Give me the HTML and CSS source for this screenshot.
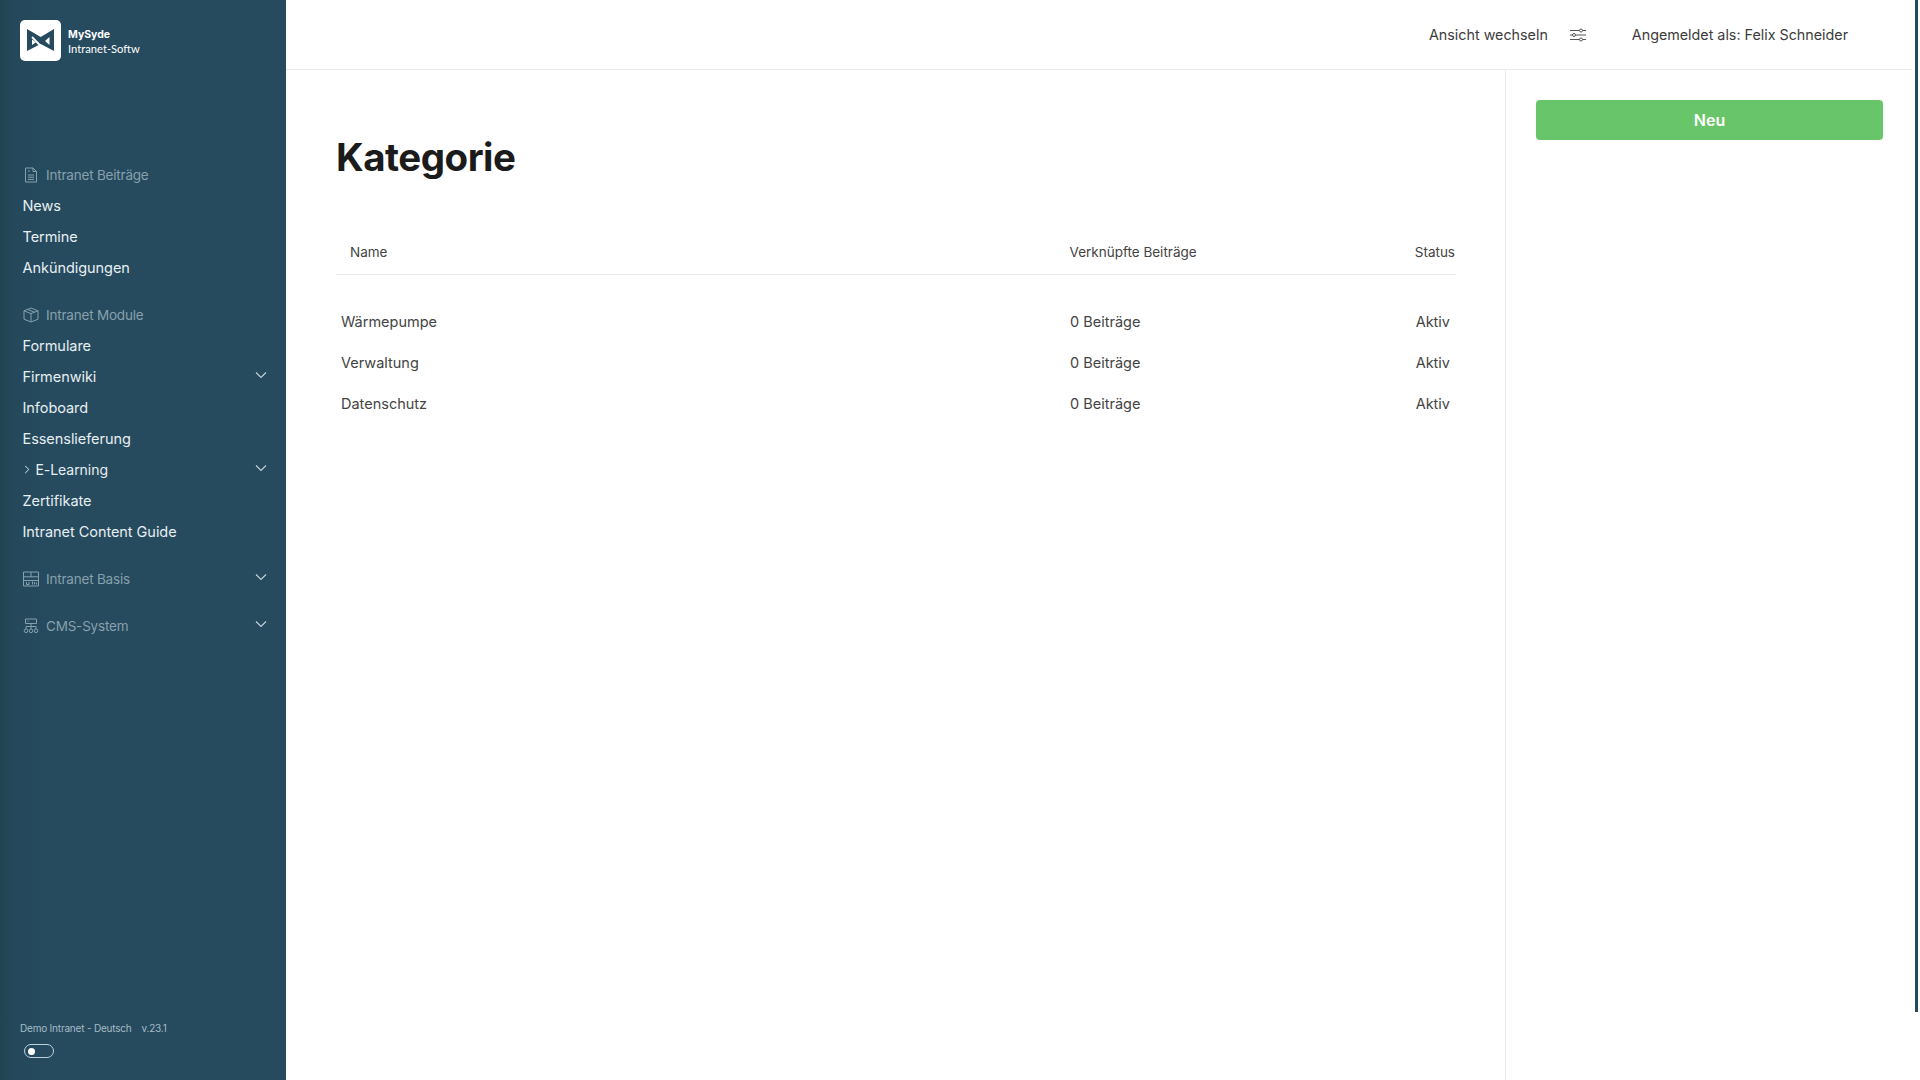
FILE: index.html
```html
<!DOCTYPE html>
<html lang="de">
<head>
<meta charset="utf-8">
<title>Kategorie</title>
<link rel="stylesheet" href="styles.css">
</head>
<body>
<div class="app">
  <aside class="sidebar">
    <div class="brand">
      <div class="logo">
        <svg viewBox="0 0 41 41" width="41" height="41"><path class="logo-mark" d="M7 9 L20.700 17 L34 9 V31 L20.700 24 L7 31 Z"/><path class="logo-cut" d="M12 17 L26 31.500"/><path class="logo-hole" d="M12 19.500V25L16 22.300ZM29.500 17V25L25 21Z"/></svg>
      </div>
      <div class="brand-text"><strong>MySyde</strong><span>Intranet-Softw</span></div>
    </div>
    <nav class="nav">
      <div class="nav-head first">
        <svg class="nav-icon" viewBox="0 0 16 16"><path d="M2.500 1h7.500l3.500 3.500V15h-11zM10 1v3.500h3.500M5 8h6M5 10.200h6M5 12.400h6M5 4h2"/></svg>
        <span>Intranet Beiträge</span>
      </div>
      <a class="nav-item">News</a>
      <a class="nav-item">Termine</a>
      <a class="nav-item">Ankündigungen</a>
      <div class="nav-head">
        <svg class="nav-icon" viewBox="0 0 16 16"><path d="M8 1 15 3.800v8.400L8 15 1 12.200V3.800zM1 3.800 8 6.600 15 3.800M8 6.600V15M4.500 2.400l7 2.800"/></svg>
        <span>Intranet Module</span>
      </div>
      <a class="nav-item">Formulare</a>
      <a class="nav-item">Firmenwiki<svg class="chev" viewBox="0 0 12 8"><path d="M1 1.500 6 6.500l5-5"/></svg></a>
      <a class="nav-item">Infoboard</a>
      <a class="nav-item">Essenslieferung</a>
      <a class="nav-item"><svg class="sub-mark" viewBox="0 0 6 10"><path d="M1 1 5 5 1 9"/></svg><span class="sub-label">E-Learning</span><svg class="chev" viewBox="0 0 12 8"><path d="M1 1.500 6 6.500l5-5"/></svg></a>
      <a class="nav-item">Zertifikate</a>
      <a class="nav-item">Intranet Content Guide</a>
      <div class="nav-head">
        <svg class="nav-icon" viewBox="0 0 16 16"><path d="M.5 1h15v14H.5zM.5 5.800h15M8 1v4.800M.5 9.500h15M3.500 11v2.500H6V11M9.500 10.500v3M11.500 11v2.500M13.500 11.500v2"/></svg>
        <span>Intranet Basis</span><svg class="chev" viewBox="0 0 12 8"><path d="M1 1.500 6 6.500l5-5"/></svg>
      </div>
      <div class="nav-head">
        <svg class="nav-icon" viewBox="0 0 16 16"><path d="M2.500 1h11v4.500h-11zM4.500 3.200h1M8 5.500V8.500M3 10.800V8.500h10v2.300M8 8.500v2.300"/><circle cx="3" cy="12.800" r="1.800"/><circle cx="8" cy="12.800" r="1.800"/><circle cx="13" cy="12.800" r="1.800"/></svg>
        <span>CMS-System</span><svg class="chev" viewBox="0 0 12 8"><path d="M1 1.500 6 6.500l5-5"/></svg>
      </div>
    </nav>
    <div class="side-foot">
      <div class="side-meta"><span>Demo Intranet - Deutsch</span><span>v.23.1</span></div>
      <div class="toggle"><i></i></div>
    </div>
  </aside>
  <div class="main">
    <header class="topbar">
      <span>Ansicht wechseln</span>
      <svg class="sliders" viewBox="0 0 16 14"><path d="M0 2.500h9.500M12.500 2.500H16M0 7h2.500M5.500 7H16M0 11.500h9.500M12.500 11.500H16"/><circle cx="11" cy="2.500" r="1.500"/><circle cx="4" cy="7" r="1.500"/><circle cx="11" cy="11.500" r="1.500"/></svg>
      <span class="user">Angemeldet als: Felix Schneider</span>
    </header>
    <div class="body">
      <main class="content">
        <h1>Kategorie</h1>
        <div class="table">
          <div class="thead">
            <span class="c-name">Name</span>
            <span class="c-count">Verknüpfte Beiträge</span>
            <span class="c-status">Status</span>
          </div>
          <div class="rows">
            <div class="row"><span class="c-name">Wärmepumpe</span><span class="c-count">0 Beiträge</span><span class="c-status">Aktiv</span></div>
            <div class="row"><span class="c-name">Verwaltung</span><span class="c-count">0 Beiträge</span><span class="c-status">Aktiv</span></div>
            <div class="row"><span class="c-name">Datenschutz</span><span class="c-count">0 Beiträge</span><span class="c-status">Aktiv</span></div>
          </div>
        </div>
      </main>
      <aside class="actions"><button class="btn-new">Neu</button></aside>
    </div>
  </div>
</div>
<div class="scrollthumb"></div>
</body>
</html>
```
FILE: styles.css
```css
* { box-sizing: border-box; }
html, body { margin: 0; height: 100%; overflow: hidden; }
body { font-family: "Inter", "Noto Sans", sans-serif; background: #fff; color: #444; }
.app { display: flex; height: 1080px; }

.sidebar {
  width: 286px; flex: none; display: flex; flex-direction: column;
  background: linear-gradient(90deg, #204552 0, #25495b 14px, #264a5e 50px, #264a5e 100%);
  color: #e6eff2;
}
.brand { display: flex; gap: 7px; padding: 20px 0 0 20px; height: 159px; }
.logo { width: 41px; height: 41px; background: #fff; border-radius: 5px; flex: none; }
.logo svg { display: block; }
.logo-mark { fill: #264a5e; }
.logo-cut { stroke: #fff; stroke-width: 1.800; fill: none; }
.logo-hole { fill: #fff; }
.brand-text { width: 72px; white-space: nowrap; display: flex; flex-direction: column; padding-top: 8px; color: #fff; font-family: "Lato", sans-serif; font-size: 11.200px; line-height: 14px; }
.brand-text strong { font-weight: 700; font-family: "Inter", sans-serif; font-size: 10.500px; }

.nav { display: flex; flex-direction: column; padding: 0 18px 0 22.500px; }
.nav-item, .nav-head { display: flex; align-items: center; height: 31px; }
.nav-item { color: #e6eff2; font-size: 14.500px; letter-spacing: -0.050px; }
.nav-head { color: #86a1ad; margin-top: 16px; font-size: 13.500px; letter-spacing: -0.200px; }
.nav-head.first { margin-top: 0; }
.nav-icon { width: 16px; height: 16px; margin: 0 7px 0 .5px; fill: none; stroke: #86a1ad; stroke-width: 1; flex: none; }
.chev { width: 12px; height: 8px; margin-left: auto; fill: none; stroke: #c5d5db; stroke-width: 1.100; position: relative; top: -2px; left: -1px; }
.sub-mark { width: 6px; height: 9px; margin: 0 6px 0 1px; fill: none; stroke: #e6eff2; stroke-width: 1.100; flex: none; }
.sub-label { font-size: 14px; }
.side-foot { margin-top: auto; padding: 0 0 22px 20px; }
.side-meta { display: flex; gap: 10px; font-size: 10px; color: #a6bcc6; letter-spacing: -0.200px; line-height: 12px; }
.toggle { width: 30px; height: 14px; margin: 10px 0 0 4px; border: 1.500px solid #c0d2d9; border-radius: 7px; display: flex; align-items: center; padding-left: 3px; }
.toggle i { width: 7px; height: 7px; border-radius: 50%; background: #fff; }

.main { flex: 1; min-width: 0; display: flex; flex-direction: column; padding-right: 8px; }
.topbar { height: 70px; flex: none; border-bottom: 1px solid #ebebeb; display: flex; align-items: center; padding-left: 1143px; font-size: 14.300px; color: #3c3c3c; }
.sliders { width: 16px; height: 14px; margin-left: 22px; fill: none; stroke: #555; stroke-width: 1; flex: none; }
.user { margin-left: 46px; white-space: nowrap; }
.body { flex: 1; display: flex; min-height: 0; }
.content { width: 1220px; flex: none; padding: 0 49px 0 50px; border-right: 1px solid #ebebeb; }
h1 { margin: 62px 0 0; font-size: 38.500px; line-height: 50px; font-weight: 700; color: #1b1b1b; letter-spacing: -0.500px; }
.table { margin-top: 43px; font-size: 13.500px; }
.thead { display: grid; grid-template-columns: 719.500px 1fr auto; height: 50px; align-items: center; padding: 4px 0 0 14px; border-bottom: 1px solid #ebebeb; }
.thead .c-status { padding-right: 1px; }
.rows { padding-top: 26px; }
.row { display: grid; grid-template-columns: 729px 1fr auto; height: 41px; align-items: center; padding: 0 6px 0 5px; font-size: 14.500px; }
.actions { flex: 1; padding: 30px 22px 0 30px; }
.btn-new { display: block; width: 347px; height: 40px; border: 0; border-radius: 4px; background: #69c569; color: #fff; font: 600 16px "Inter", sans-serif; }
.scrollthumb { position: absolute; top: 0; left: 1915px; width: 3px; height: 1012px; background: #26495c; }
```
